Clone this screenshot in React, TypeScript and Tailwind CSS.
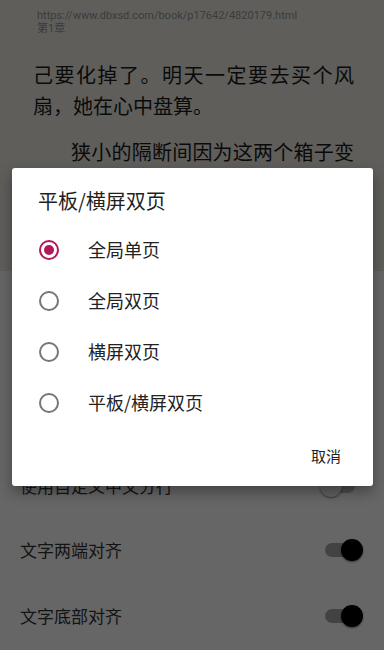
import React from "react";

const OPTIONS = ["全局单页", "全局双页", "横屏双页", "平板/横屏双页"];

function Radio({ checked }: { checked: boolean }) {
  return (
    <span
      className={
        checked
          ? "flex h-[20px] w-[20px] items-center justify-center rounded-full border-2 border-[#b0185a]"
          : "flex h-[20px] w-[20px] items-center justify-center rounded-full border-2 border-[#767676]"
      }
    >
      {checked && <span className="h-[10px] w-[10px] rounded-full bg-[#b0185a]" />}
    </span>
  );
}

function Switch({ on }: { on: boolean }) {
  return (
    <div className="relative h-[22px] w-[36px]">
      <div
        className={
          on
            ? "absolute left-[0px] top-[4px] h-[14px] w-[34px] rounded-full bg-[#a8a8a8]"
            : "absolute left-[0px] top-[4px] h-[14px] w-[34px] rounded-full bg-[#bdbdbd]"
        }
      />
      <div
        className={
          on
            ? "absolute right-[-2px] top-0 h-[22px] w-[22px] rounded-full bg-black shadow-[0_1px_2px_rgba(0,0,0,0.5)]"
            : "absolute left-[-1px] top-0 h-[22px] w-[22px] rounded-full bg-[#f2f2f2] shadow-[0_1px_2px_rgba(0,0,0,0.5)]"
        }
      />
    </div>
  );
}

export default function App() {
  const cjk = { fontFamily: '"Noto Sans CJK SC", "Noto Sans", sans-serif' };
  return (
    <div className="relative h-[650px] w-[384px] overflow-hidden bg-white" style={cjk}>
      {/* Reader page */}
      <div className="h-[271px] bg-[#eeebe4] pl-[33px] pt-[9px]">
        <div
          className="pl-[4px] text-[11px] leading-[13px] text-[#969696]"
          style={{ fontFamily: 'Roboto, "Noto Sans CJK SC", sans-serif' }}
        >
          <div>https://www.dbxsd.com/book/p17642/4820179.html</div>
          <div>第1章</div>
        </div>
        <div className="mt-[24px] w-[321px] whitespace-nowrap text-[20px] leading-[31px] text-[#1a1a1a]">
          <div className="text-justify [text-align-last:justify]">己要化掉了。明天一定要去买个风</div>
          <div>扇，她在心中盘算。</div>
          <div className="mt-[15px] pl-[38px] text-justify [text-align-last:justify]">狭小的隔断间因为这两个箱子变</div>
        </div>
      </div>

      {/* Settings sheet */}
      <div className="mx-[1px] h-[379px] bg-white">
        <div className="flex flex-col pt-[182px]">
          <div className="flex h-[66px] items-center justify-between pl-[19px] pr-[26px] text-[17px] text-[#333]">
            <span>使用自定义中文分行</span>
            <Switch on={false} />
          </div>
          <div className="-mt-[2px] flex h-[66px] items-center justify-between pl-[19px] pr-[22px] text-[17px] text-[#333]">
            <span>文字两端对齐</span>
            <Switch on />
          </div>
          <div className="flex h-[66px] items-center justify-between pl-[19px] pr-[22px] text-[17px] text-[#333]">
            <span>文字底部对齐</span>
            <Switch on />
          </div>
        </div>
      </div>

      {/* Scrim */}
      <div className="absolute inset-0 bg-black/60" />

      {/* Dialog */}
      <div className="absolute left-[12px] top-[168px] h-[318px] w-[361px] rounded-[3px] bg-white shadow-[0_6px_14px_rgba(0,0,0,0.35)]">
        <div className="pl-[26px] pt-[20px] text-[20px] leading-[26px] text-[#1f1f1f]">平板/横屏双页</div>
        <div className="mt-[10px] flex flex-col">
          {OPTIONS.map((label, i) => (
            <div key={label} className="flex h-[51px] items-center pl-[27px]">
              <Radio checked={i === 0} />
              <span className="ml-[29px] text-[18px] text-[#222]">{label}</span>
            </div>
          ))}
        </div>
        <div className="mt-[17px] flex justify-end pr-[32px]">
          <span className="text-[15px] text-[#222]">取消</span>
        </div>
      </div>
    </div>
  );
}
